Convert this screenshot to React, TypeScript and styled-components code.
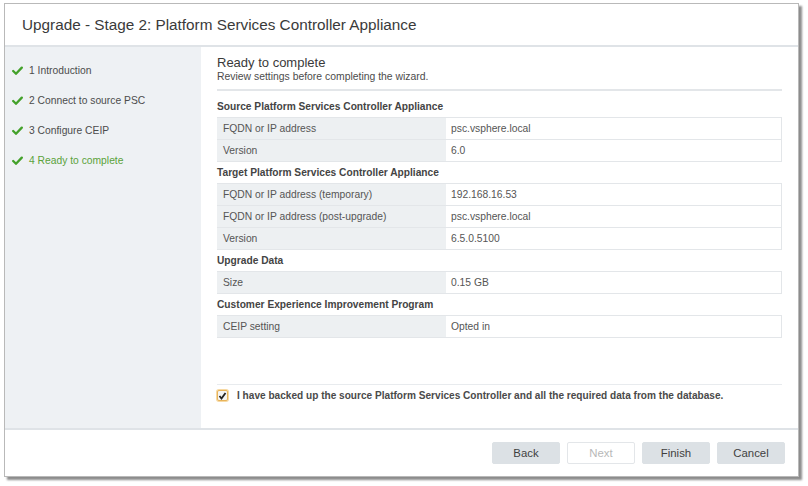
import React from "react";
import styled, { createGlobalStyle } from "styled-components";

const Global = createGlobalStyle`
  html, body { margin: 0; padding: 0; background: #ffffff; }
  body { font-family: "Liberation Sans", Arial, sans-serif; }
  * { box-sizing: border-box; }
`;

const Page = styled.div`
  width: 808px;
  height: 486px;
  padding: 3px 0 0 4px;
  background: #ffffff;
`;

const Window = styled.div`
  width: 795px;
  height: 474px;
  display: flex;
  flex-direction: column;
  background: #ffffff;
  border: 1px solid #b9b9b9;
  box-shadow: 3px 3px 2px rgba(0, 0, 0, 0.45);
`;

const Header = styled.div`
  height: 43px;
  flex: none;
  display: flex;
  align-items: center;
  padding-left: 17px;
  border-bottom: 2px solid #dfe3e7;
  font-size: 15.3px;
  color: #3a3a3a;
`;

const Body = styled.div`
  flex: 1;
  display: flex;
  min-height: 0;
`;

const Sidebar = styled.div`
  width: 196px;
  flex: none;
  background: #eef1f4;
  padding-top: 8px;
  display: flex;
  flex-direction: column;
`;

const Step = styled.div<{ $active?: boolean }>`
  height: 30px;
  display: flex;
  align-items: center;
  gap: 6px;
  padding-left: 7px;
  font-size: 10.3px;
  color: ${(p) => (p.$active ? "#5aa23a" : "#4c4c4c")};
`;

const Content = styled.div`
  flex: 1;
  display: flex;
  flex-direction: column;
  padding: 8px 16px 22px 16px;
`;

const Title = styled.div`
  font-size: 13px;
  color: #3a3a3a;
  line-height: 15px;
`;

const Subtitle = styled.div`
  font-size: 10.4px;
  color: #4c4c4c;
  line-height: 13px;
  padding-bottom: 6px;
  border-bottom: 2px solid #e3e6e9;
`;

const Sections = styled.div`
  padding-top: 5px;
  display: flex;
  flex-direction: column;
`;

const SectionTitle = styled.div`
  height: 21px;
  display: flex;
  align-items: center;
  font-size: 10.2px;
  font-weight: bold;
  color: #444444;
`;

const Table = styled.div`
  display: grid;
  grid-template-columns: 229px 1fr;
  border-top: 1px solid #e3e6e9;
`;

const LabelCell = styled.div`
  height: 22px;
  display: flex;
  align-items: center;
  padding-left: 6px;
  background: #edf0f2;
  border-bottom: 1px solid #e3e6e9;
  font-size: 10.3px;
  color: #555555;
`;

const ValueCell = styled.div`
  height: 22px;
  display: flex;
  align-items: center;
  padding-left: 5px;
  background: #ffffff;
  border-bottom: 1px solid #e3e6e9;
  border-right: 1px solid #e3e6e9;
  font-size: 10.3px;
  color: #555555;
`;

const Ack = styled.div`
  margin-top: auto;
  border-top: 1px solid #e8ebee;
  height: 22px;
  display: flex;
  align-items: center;
  gap: 9px;
  font-size: 10.1px;
  font-weight: bold;
  color: #4a4a4a;
`;

const Box = styled.span`
  width: 11px;
  height: 11px;
  border: 1px solid #e8b45a;
  border-radius: 2px;
  background: #f4f4f4;
  box-shadow: 0 0 0 1px #f7d9a3;
  display: flex;
  align-items: center;
  justify-content: center;
`;

const Footer = styled.div`
  height: 48px;
  flex: none;
  border-top: 2px solid #dfe3e7;
  display: flex;
  align-items: center;
  justify-content: flex-end;
  gap: 7px;
  padding: 0 13px 1px 0;
`;

const Button = styled.button<{ $disabled?: boolean }>`
  width: 68px;
  height: 22px;
  border: 1px solid ${(p) => (p.$disabled ? "#e3e6e9" : "#dce1e5")};
  background: ${(p) => (p.$disabled ? "#ffffff" : "#dce1e5")};
  color: ${(p) => (p.$disabled ? "#b8b8b8" : "#3f3f3f")};
  font-family: "Liberation Sans", Arial, sans-serif;
  font-size: 11.4px;
  border-radius: 2px;
  padding: 0;
`;

const Check = () => (
  <svg width="11" height="9" viewBox="0 0 11 9">
    <path d="M1.2 5 L4 7.8 L9.8 1.6" fill="none" stroke="#43a12a" strokeWidth="2.3" strokeLinecap="round" strokeLinejoin="round" />
  </svg>
);

const BoxCheck = () => (
  <svg width="9" height="8" viewBox="0 0 9 8">
    <path d="M1.5 4 L3.5 6.5 L7.5 1" fill="none" stroke="#222" strokeWidth="1.8" />
  </svg>
);

const sections: { title: string; rows: [string, string][] }[] = [
  {
    title: "Source Platform Services Controller Appliance",
    rows: [
      ["FQDN or IP address", "psc.vsphere.local"],
      ["Version", "6.0"],
    ],
  },
  {
    title: "Target Platform Services Controller Appliance",
    rows: [
      ["FQDN or IP address (temporary)", "192.168.16.53"],
      ["FQDN or IP address (post-upgrade)", "psc.vsphere.local"],
      ["Version", "6.5.0.5100"],
    ],
  },
  { title: "Upgrade Data", rows: [["Size", "0.15 GB"]] },
  { title: "Customer Experience Improvement Program", rows: [["CEIP setting", "Opted in"]] },
];

const steps = ["1 Introduction", "2 Connect to source PSC", "3 Configure CEIP", "4 Ready to complete"];

export default function App() {
  return (
    <Page>
      <Global />
      <Window>
        <Header>Upgrade - Stage 2: Platform Services Controller Appliance</Header>
        <Body>
          <Sidebar>
            {steps.map((s, i) => (
              <Step key={s} $active={i === steps.length - 1}>
                <Check />
                {s}
              </Step>
            ))}
          </Sidebar>
          <Content>
            <Title>Ready to complete</Title>
            <Subtitle>Review settings before completing the wizard.</Subtitle>
            <Sections>
              {sections.map((sec) => (
                <React.Fragment key={sec.title}>
                  <SectionTitle>{sec.title}</SectionTitle>
                  <Table>
                    {sec.rows.map(([l, v]) => (
                      <React.Fragment key={l}>
                        <LabelCell>{l}</LabelCell>
                        <ValueCell>{v}</ValueCell>
                      </React.Fragment>
                    ))}
                  </Table>
                </React.Fragment>
              ))}
            </Sections>
            <Ack>
              <Box>
                <BoxCheck />
              </Box>
              I have backed up the source Platform Services Controller and all the required data from the database.
            </Ack>
          </Content>
        </Body>
        <Footer>
          <Button>Back</Button>
          <Button $disabled>Next</Button>
          <Button>Finish</Button>
          <Button>Cancel</Button>
        </Footer>
      </Window>
    </Page>
  );
}
